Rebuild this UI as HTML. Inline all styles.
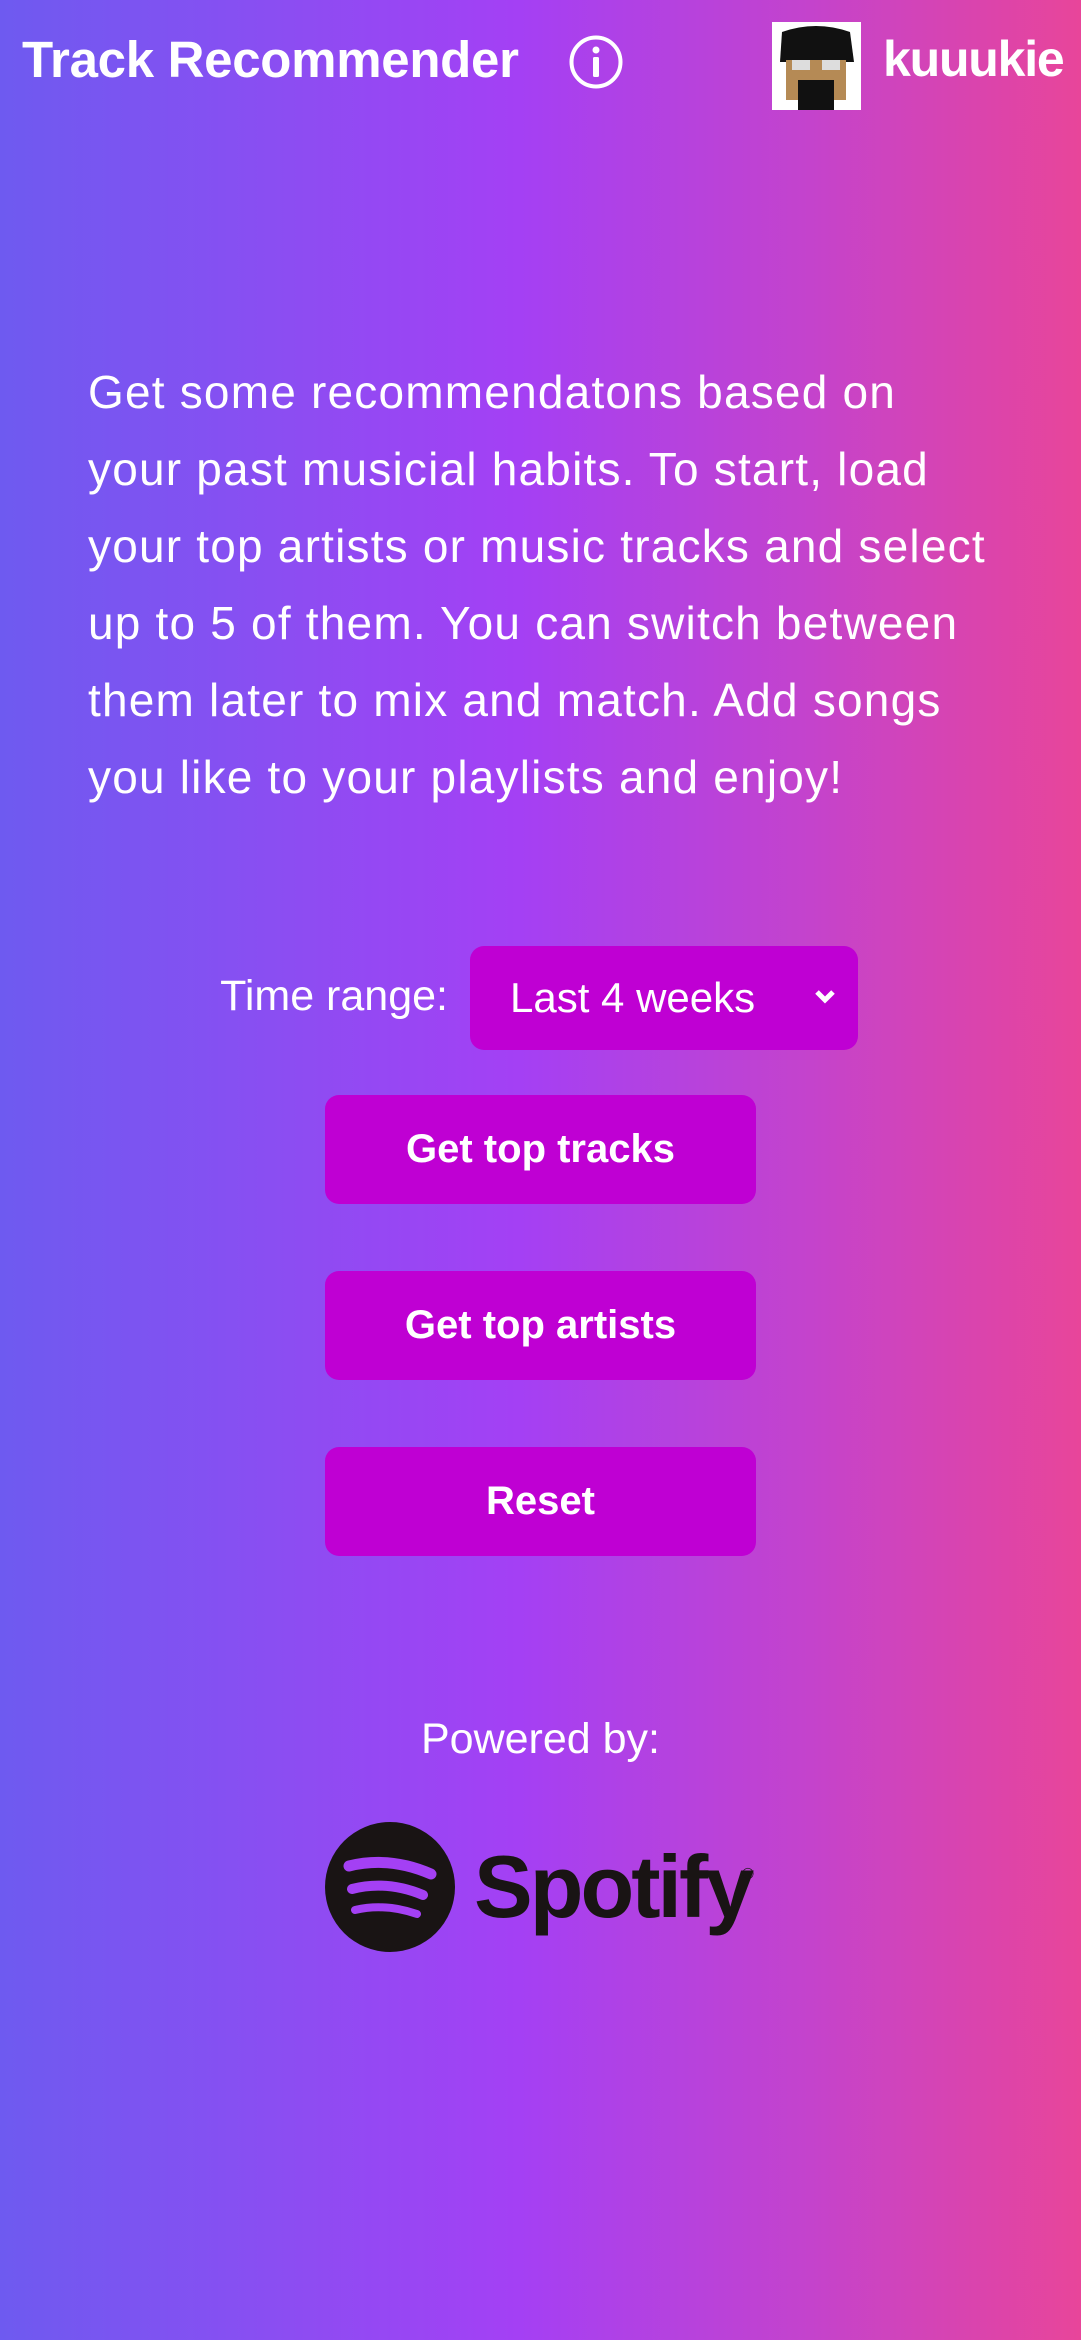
<!DOCTYPE html>
<html><head><meta charset="utf-8"><style>
*{margin:0;padding:0;box-sizing:border-box}
body{width:1081px;height:2340px;overflow:hidden;font-family:"Liberation Sans",sans-serif;color:#fff;
background:linear-gradient(90deg,#6e5af0 0%,#8a4ef2 25%,#a440f4 48%,#c443cc 75%,#e8459a 100%);position:relative}
.a{position:absolute}
.title{left:22px;top:30px;font-size:51px;font-weight:bold;letter-spacing:-0.3px}
.user{left:883px;top:30px;font-size:50px;font-weight:bold;letter-spacing:-1.2px}
.p{left:88px;top:354px;font-size:46px;line-height:77px;white-space:nowrap;letter-spacing:1.2px}
.btn{left:325px;width:431px;height:109px;background:#bf00d3;border-radius:14px;font-size:40px;font-weight:bold;text-align:center;line-height:109px}
</style></head><body>
<div class="a title">Track Recommender</div>
<svg class="a" style="left:568px;top:34px" width="56" height="56" viewBox="0 0 56 56"><circle cx="28" cy="28" r="24.5" fill="none" stroke="#fff" stroke-width="4"/><circle cx="28" cy="16" r="3.5" fill="#fff"/><rect x="25" y="23" width="6" height="20" rx="1.5" fill="#fff"/></svg>
<svg class="a" style="left:772px;top:22px" width="89" height="88" viewBox="0 0 89 88"><rect width="89" height="88" fill="#fff"/><path d="M10 10 Q44 -2 78 10 L82 40 L8 40Z" fill="#111"/><rect x="14" y="38" width="60" height="20" fill="#b58a55"/><rect x="20" y="38" width="18" height="10" fill="#ddd"/><rect x="50" y="38" width="18" height="10" fill="#ddd"/><rect x="26" y="58" width="36" height="30" fill="#111"/><rect x="14" y="58" width="12" height="20" fill="#b58a55"/><rect x="62" y="58" width="12" height="20" fill="#b58a55"/></svg>
<div class="a user">kuuukie</div>
<div class="a p">Get some recommendatons based on<br>your past musicial habits. To start, load<br>your top artists or music tracks and select<br>up to 5 of them. You can switch between<br>them later to mix and match. Add songs<br>you like to your playlists and enjoy!</div>
<div class="a" style="right:633px;top:972px;font-size:43px">Time range:</div>
<div class="a" style="left:470px;top:946px;width:388px;height:104px;background:#bf00d3;border-radius:14px">
<div class="a" style="left:40px;top:28px;font-size:42px">Last 4 weeks</div>
<svg class="a" style="left:344px;top:43px" width="22" height="16" viewBox="0 0 22 16"><path d="M3 3 L11 11 L19 3" fill="none" stroke="#fff" stroke-width="5"/></svg>
</div>
<div class="a btn" style="top:1095px">Get top tracks</div>
<div class="a btn" style="top:1271px">Get top artists</div>
<div class="a btn" style="top:1447px">Reset</div>
<div class="a" style="left:0;width:1081px;text-align:center;top:1715px;font-size:43px">Powered by:</div>
<svg class="a" style="left:325px;top:1822px" width="130" height="130" viewBox="0 0 130 130"><circle cx="65" cy="65" r="65" fill="#191414"/><g fill="none" stroke="#a440f4" stroke-linecap="round"><path d="M24 44 Q65 34 106 52" stroke-width="11"/><path d="M27 67 Q62 58 98 73" stroke-width="10"/><path d="M30 88 Q60 81 92 92" stroke-width="8"/></g></svg>
<div class="a" style="left:474px;top:1836px;font-size:88px;font-weight:bold;color:#191414;letter-spacing:-3px">Spotify</div>
<div class="a" style="left:742px;top:1866px;font-size:16px;color:#191414">®</div>
</body></html>
